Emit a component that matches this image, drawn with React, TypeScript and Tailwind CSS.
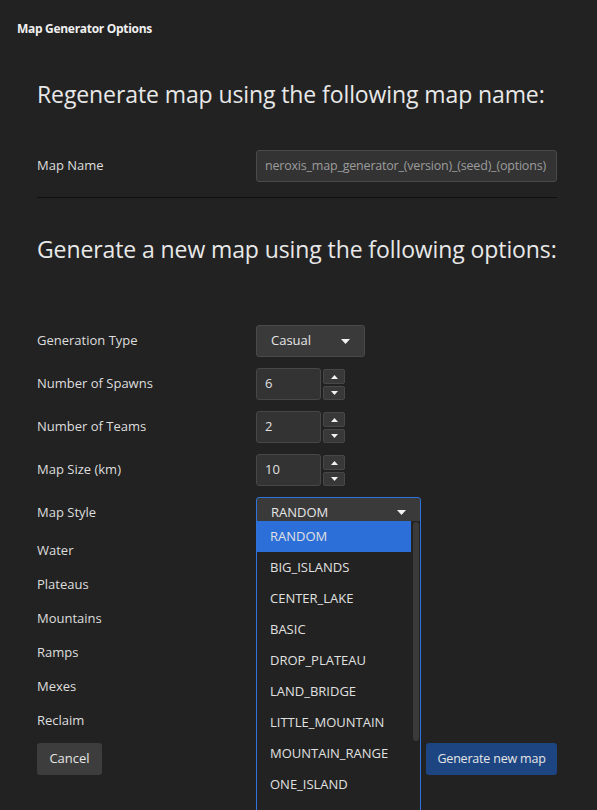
import React from 'react';

const font = { fontFamily: '"Open Sans", "Noto Sans", sans-serif' };

const styles = [
  'RANDOM',
  'BIG_ISLANDS',
  'CENTER_LAKE',
  'BASIC',
  'DROP_PLATEAU',
  'LAND_BRIDGE',
  'LITTLE_MOUNTAIN',
  'MOUNTAIN_RANGE',
  'ONE_ISLAND',
];

const Arrow: React.FC<{ up?: boolean; w?: number; h?: number }> = ({ up, w = 9, h = 5 }) => (
  <svg width={w} height={h} viewBox={`0 0 ${w} ${h}`} className="block">
    {up ? (
      <polygon points={`0,${h} ${w},${h} ${w / 2},0`} fill="#f2f2f2" />
    ) : (
      <polygon points={`0,0 ${w},0 ${w / 2},${h}`} fill="#f2f2f2" />
    )}
  </svg>
);

const Spinner: React.FC<{ value: string }> = ({ value }) => (
  <div className="flex gap-[2px] h-8">
    <div className="w-[65px] h-8 rounded-[3px] border border-[#474747] bg-[#333333] flex items-center pl-[8px] text-[13px] text-[#e0e0e0]">
      {value}
    </div>
    <div className="flex flex-col gap-[2px] pt-[1px]">
      <div className="w-[22px] h-[15px] rounded-[2px] border border-[#474747] bg-[#383838] flex items-center justify-center">
        <Arrow up w={7} h={4} />
      </div>
      <div className="w-[22px] h-[14px] rounded-[2px] border border-[#474747] bg-[#383838] flex items-center justify-center">
        <Arrow w={7} h={4} />
      </div>
    </div>
  </div>
);

const Row: React.FC<{ label: string; h?: string; children?: React.ReactNode }> = ({ label, h = 'h-8', children }) => (
  <div className={`grid grid-cols-[219px_1fr] items-center ${h}`}>
    <span className="text-[13px] text-[#dedede]">{label}</span>
    <div>{children}</div>
  </div>
);

export default function App() {
  return (
    <div className="w-[597px] h-[810px] overflow-hidden bg-[#222222] text-[#e0e0e0]" style={font}>
      <div className="pl-[17px] pt-[20px] h-[38px] text-[12px] font-bold tracking-[-0.3px] text-[#f0f0f0]">
        Map Generator Options
      </div>

      <div className="ml-[37px] w-[520px]">
        <h1 className="mt-[38px] h-[36px] text-[23px] leading-[36px] tracking-[-0.1px] text-[#e8e8e8] whitespace-nowrap">
          Regenerate map using the following map name:
        </h1>

        <div className="mt-[38px] grid grid-cols-[219px_1fr] items-center h-[32px]">
          <span className="text-[13px] text-[#dedede]">Map Name</span>
          <div className="h-[32px] rounded-[3px] border border-[#4a4a4a] bg-[#333333] flex items-center pl-[8px] text-[12.5px] tracking-[-0.2px] text-[#9c9c9c]">
            neroxis_map_generator_(version)_(seed)_(options)
          </div>
        </div>

        <div className="mt-[15px] h-px bg-[#0f0f0f]" />

        <h2 className="mt-[33px] h-[36px] text-[23px] leading-[36px] tracking-[-0.1px] text-[#e8e8e8] whitespace-nowrap">
          Generate a new map using the following options:
        </h2>

        <div className="mt-[58px] flex flex-col gap-[11px]">
          <Row label="Generation Type">
            <div className="w-[109px] h-8 rounded-[3px] border border-[#4a4a4a] bg-[#3a3a3a] flex items-center justify-between pl-[14px] pr-[14px] text-[13px] text-[#e6e6e6]">
              <span>Casual</span>
              <Arrow />
            </div>
          </Row>
          <Row label="Number of Spawns">
            <Spinner value="6" />
          </Row>
          <Row label="Number of Teams">
            <Spinner value="2" />
          </Row>
          <Row label="Map Size (km)">
            <Spinner value="10" />
          </Row>
          <Row label="Map Style">
            <div className="relative w-[165px] h-8">
              <div className="h-8 rounded-[3px] border border-[#2f72d9] bg-[#3a3a3a] flex items-start justify-between pl-[14px] pr-[14px] pt-[4px] text-[13px] leading-[20px] text-[#e6e6e6]">
                <span>RANDOM</span>
                <span className="pt-[8px]">
                  <Arrow />
                </span>
              </div>
              <div className="absolute z-10 left-0 top-[24px] w-[165px] h-[320px] border-x border-[#2f72d9] bg-[#222222] overflow-hidden">
                {styles.map((s, i) => (
                  <div
                    key={s}
                    className={`h-[31px] w-[154px] flex items-center pl-[13px] text-[13px] text-[#e0e0e0] ${
                      i === 0 ? 'bg-[#2c6fd8]' : ''
                    }`}
                  >
                    {s}
                  </div>
                ))}
                <div className="absolute right-[1px] top-[1px] w-[6px] h-[219px] rounded-[3px] bg-[#3a3a3a]" />
              </div>
            </div>
          </Row>
        </div>

        <div className="mt-[5px] flex flex-col">
          {['Water', 'Plateaus', 'Mountains', 'Ramps', 'Mexes', 'Reclaim'].map((l) => (
            <Row key={l} label={l} h="h-[34px]" />
          ))}
        </div>

        <div className="mt-[5px] flex justify-between">
          <button className="w-[65px] h-8 rounded-[3px] bg-[#3d3d3d] text-[13px] text-[#e6e6e6]">Cancel</button>
          <button className="w-[131px] h-8 rounded-[3px] bg-[#1c4582] text-[12.5px] tracking-[-0.2px] text-[#e6e6e6]">
            Generate new map
          </button>
        </div>
      </div>
    </div>
  );
}
